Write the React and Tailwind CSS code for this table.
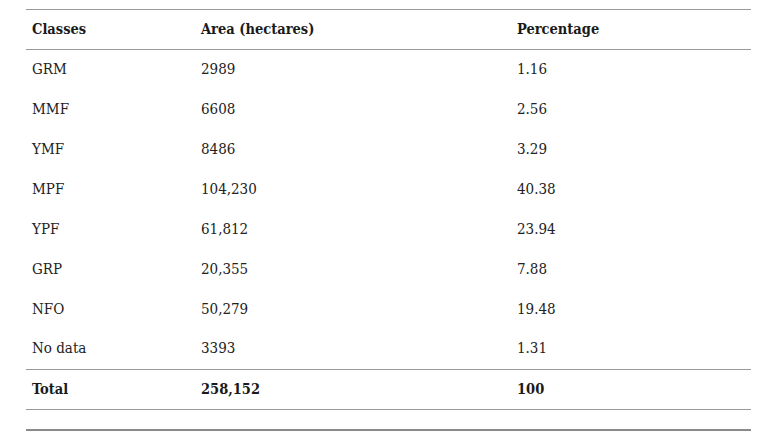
import React from "react";

const rows = [
  ["GRM", "2989", "1.16"],
  ["MMF", "6608", "2.56"],
  ["YMF", "8486", "3.29"],
  ["MPF", "104,230", "40.38"],
  ["YPF", "61,812", "23.94"],
  ["GRP", "20,355", "7.88"],
  ["NFO", "50,279", "19.48"],
  ["No data", "3393", "1.31"],
];

export default function App() {
  return (
    <div
      className="w-[768px] h-[446px] bg-white pt-[9px] pl-[26px]"
      style={{ fontFamily: '"DejaVu Serif Condensed", "DejaVu Serif", serif', fontStretch: "condensed" }}
    >
      <div className="w-[725px]">
        <div className="flex h-[41px] items-center pb-[2px] border-t border-b border-[#9a9a9a] text-[14.5px] font-bold text-[#1a1a1a]">
          <div className="w-[169px] pl-[6px]">Classes</div>
          <div className="w-[316px] pl-[6px]">Area (hectares)</div>
          <div className="flex-1 pl-[6px]">Percentage</div>
        </div>
        {rows.map((r, i) => (
          <div
            key={r[0]}
            className={
              i === rows.length - 1
                ? "flex h-[40px] items-center pb-[2px] border-b border-[#9a9a9a] text-[15px] text-[#222]"
                : "flex h-[40px] items-center pb-[2px] text-[15px] text-[#222]"
            }
          >
            <div className="w-[169px] pl-[6px]">{r[0]}</div>
            <div className="w-[316px] pl-[6px]">{r[1]}</div>
            <div className="flex-1 pl-[6px]">{r[2]}</div>
          </div>
        ))}
        <div className="flex h-[40px] items-center pb-[2px] border-b border-[#9a9a9a] text-[14.5px] font-bold text-[#1a1a1a]">
          <div className="w-[169px] pl-[6px]">Total</div>
          <div className="w-[316px] pl-[6px]">258,152</div>
          <div className="flex-1 pl-[6px]">100</div>
        </div>
        <div className="mt-[19px] h-[2px] bg-[#8a8a8a]" />
      </div>
    </div>
  );
}
